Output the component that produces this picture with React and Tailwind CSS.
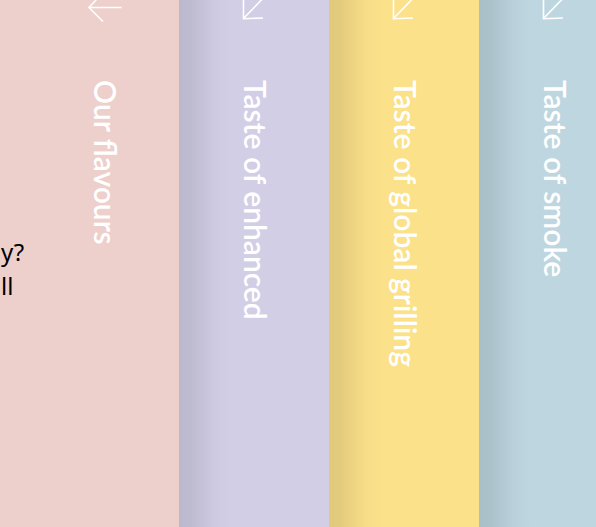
const tabs = [
  { label: 'Taste of enhanced', tone: 'w-[150px] shrink-0 bg-[#d2cee6]' },
  { label: 'Taste of global grilling', tone: 'w-[150px] shrink-0 bg-[#fbe18a]' },
  { label: 'Taste of smoke', tone: 'min-w-0 flex-1 bg-[#bed6e0]' },
];

const shade =
  'bg-[linear-gradient(to_right,rgba(0,0,0,0.105)_0px,rgba(0,0,0,0.095)_12px,rgba(0,0,0,0.06)_24px,rgba(0,0,0,0.02)_36px,transparent_52px)]';

function Arrow({ open }) {
  return (
    <svg
      viewBox="0 0 36 24"
      className="h-6 w-9 shrink-0"
      fill="none"
      stroke="white"
      strokeWidth="1.6"
      aria-hidden="true"
    >
      {open ? (
        <path d="M35.5 7.5H3M17 -7.5L3 7.5L17 21.5" />
      ) : (
        <path d="M35.5 -10.5L7.5 18.5M7.5 -3V19.5M7 18.8L27 18" />
      )}
    </svg>
  );
}

function Tab({ label, open = false }) {
  return (
    <button
      type="button"
      aria-expanded={open}
      className="flex w-[150px] shrink-0 cursor-pointer flex-col gap-14 pl-[57px] text-white"
    >
      <Arrow open={open} />
      <span className="w-10 font-['Lato_Semibold',Lato,sans-serif] text-[30px] leading-10 font-semibold whitespace-nowrap [writing-mode:vertical-rl]">
        {label}
      </span>
    </button>
  );
}

export default function App() {
  return (
    <main className="flex min-h-screen w-full overflow-hidden font-[Lato,sans-serif]">
      <section className="flex shrink-0 bg-[#edd0cc]">
        <div className="w-[29px] overflow-hidden pt-[235px] pl-px font-['Noto_Sans',sans-serif] text-2xl leading-[34px] text-black">
          <p>y?</p>
          <p>ll</p>
        </div>
        <Tab label="Our flavours" open />
      </section>
      {tabs.map(({ label, tone }) => (
        <section key={label} className={`flex overflow-hidden ${tone} ${shade}`}>
          <Tab label={label} />
        </section>
      ))}
    </main>
  );
}
